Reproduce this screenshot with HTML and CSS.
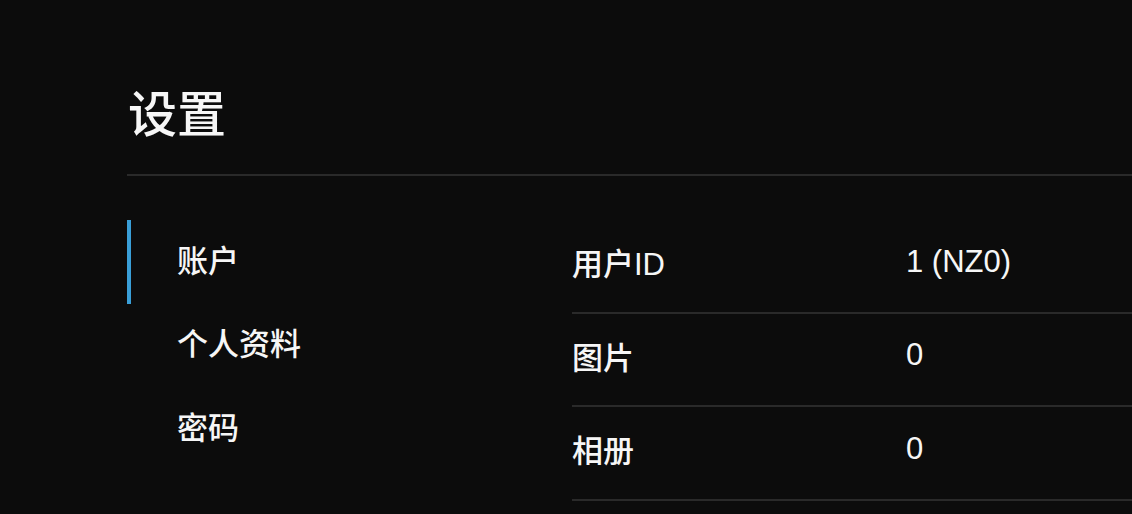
FILE: index.html
```html
<!DOCTYPE html>
<html lang="zh-CN">
<head>
<meta charset="utf-8">
<title>设置</title>
<link rel="stylesheet" href="styles.css">
</head>
<body>
<div class="page">
  <header class="page-header">
    <h1 class="page-title">设置</h1>
  </header>
  <div class="settings">
    <nav class="side-nav">
      <a class="nav-item active">账户</a>
      <a class="nav-item">个人资料</a>
      <a class="nav-item">密码</a>
    </nav>
    <div class="info-table">
      <div class="info-row"><div class="info-label">用户ID</div><div class="info-value">1 (NZ0)</div></div>
      <div class="info-row"><div class="info-label">图片</div><div class="info-value">0</div></div>
      <div class="info-row"><div class="info-label">相册</div><div class="info-value">0</div></div>
    </div>
  </div>
</div>
</body>
</html>
```
FILE: styles.css
```css
html, body {
  margin: 0;
  padding: 0;
  background: #0c0c0c;
  color: #f6f6f6;
  font-family: "Liberation Sans", "Noto Sans CJK SC", sans-serif;
  font-weight: 500;
  overflow: hidden;
}

.page {
  padding-left: 127px;
}

.page-header {
  padding-top: 86px;
  padding-bottom: 30px;
  border-bottom: 2px solid #2a2a2a;
}

.page-title {
  margin: 0;
  padding-left: 1px;
  font-size: 49px;
  line-height: 58px;
  font-weight: 500;
}

.settings {
  display: flex;
  margin-top: 44px;
}

.side-nav {
  width: 445px;
  flex: none;
  display: flex;
  flex-direction: column;
}

.nav-item {
  box-sizing: border-box;
  display: flex;
  align-items: center;
  height: 83.5px;
  padding-left: 46px;
  padding-bottom: 7px;
  border-left: 4px solid transparent;
  font-size: 31px;
  color: #f6f6f6;
}

.nav-item.active {
  border-left-color: #3a9fd8;
}

.info-table {
  flex: 1;
  display: flex;
  flex-direction: column;
}

.info-row {
  box-sizing: border-box;
  display: flex;
  align-items: center;
  height: 93.5px;
  padding-bottom: 8px;
  border-bottom: 2px solid #2a2a2a;
  font-size: 31px;
}

.info-label {
  width: 334px;
  flex: none;
}

.info-value {
  flex: 1;
}
```
